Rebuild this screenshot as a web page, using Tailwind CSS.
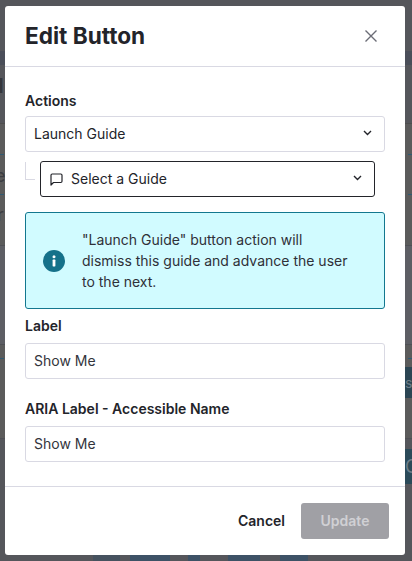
<!DOCTYPE html>
<html lang="en">
<head>
    <meta charset="UTF-8">
    <meta name="viewport" content="width=device-width, initial-scale=1.0">
    <title>Edit Button</title>
    <script src="https://cdn.jsdelivr.net/npm/@tailwindcss/browser@4"></script>
</head>
<body class="relative h-[561px] w-[412px] overflow-hidden bg-[#55565b] font-['Inter',sans-serif]">
    <!-- Dimmed page behind the modal -->
    <div class="flex h-full flex-col">
        <div class="h-[51px] bg-[#55565b]"></div>
        <div class="h-[14px] bg-[#4a4e59]"></div>
        <div class="h-[58px] bg-[#55565b]"></div>
        <div class="h-[122px] border-t border-[#4e4e4e] bg-[#5b5b5b]">
            <div class="mt-[30px] flex justify-between"><span class="h-px w-[4px] bg-[#2f5a73]"></span><span class="h-px w-[4px] bg-[#2f5a73]"></span></div>
            <div class="mt-[39px] flex justify-between"><span class="h-px w-[4px] bg-[#2f5a73]"></span><span class="h-px w-[4px] bg-[#2f5a73]"></span></div>
        </div>
        <div class="h-[99px] border-t border-[#4f5055] bg-[#5d5e64]"></div>
        <div class="h-[94px] border-t border-[#4f5055] bg-[#5b5b5b]">
            <div class="mt-[13px] flex justify-between"><span class="h-px w-[4px] bg-[#2f5a73]"></span><span class="h-px w-[4px] bg-[#2f5a73]"></span></div>
            <div class="mt-[8px] ml-auto flex h-[31px] w-[7px] items-center overflow-hidden bg-[#2b4553] text-[14px] text-[#6d7d88]">s</div>
        </div>
        <div class="flex h-[123px] flex-col border-t border-[#4f5055] bg-[#55565b]">
            <div class="mt-[10px] ml-auto flex h-[35px] w-[7px] items-center overflow-hidden bg-[#2b4a59] text-[18px] text-[#6d7d88]">C</div>
            <div class="mt-auto ml-[93px] flex h-[6px] gap-[10px]">
                <span class="w-[27px] bg-[#46525f]"></span>
                <span class="w-[40px] bg-[#3d5266]"></span>
                <span class="ml-[8px] w-[12px] bg-[#3d5266]"></span>
                <span class="ml-[18px] w-[32px] bg-[#3d5266]"></span>
                <span class="ml-[10px] w-[28px] bg-[#3d5266]"></span>
            </div>
        </div>
    </div>

    <!-- Letters of the page showing past the modal's left edge -->
    <span class="absolute top-[74px] -left-[9px] text-[20px] leading-[24px] font-bold text-[#35363b]">d</span>
    <span class="absolute top-[166px] -left-[5px] text-[18px] leading-[20px] text-[#3c3d42]">e</span>
    <span class="absolute top-[205px] -left-[3px] text-[18px] leading-[20px] text-[#3c3d42]">r</span>

    <!-- Modal -->
    <div class="absolute top-[6px] left-[5px] flex h-[549px] w-[400px] flex-col rounded-[3px] bg-white text-[#23242a]">
        <div class="flex h-[61px] items-center justify-between border-b border-[#d9d9e3] pr-[28px] pl-[20px]">
            <h1 class="text-[22.6px] font-bold leading-none">Edit Button</h1>
            <button class="text-[#6b6c76]">
                <svg class="h-[12px] w-[12px]" viewBox="0 0 12 12" fill="none" stroke="currentColor" stroke-width="1.4"><path d="M.5.5l11 11M11.5.5l-11 11"/></svg>
            </button>
        </div>

        <div class="flex-1 px-[20px] pt-[25px]">
            <label class="block text-[14px] font-semibold leading-[17px]">Actions</label>
            <div class="mt-[7px] flex h-[36px] items-center justify-between rounded-[3px] border border-[#d9d9e3] pr-[12px] pb-[2px] pl-[8px] text-[14px]">
                <span>Launch Guide</span>
                <svg class="h-[6px] w-[9px] text-[#23242a]" viewBox="0 0 9 6" fill="none" stroke="currentColor" stroke-width="1.4"><path d="M1 1l3.5 3.5L8 1"/></svg>
            </div>

            <div class="relative mt-[9px] mr-[10px] ml-[15px]">
                <div class="absolute top-[1px] -left-[15px] h-[18px] w-[10px] border-b border-l border-[#d9d9e3]"></div>
                <div class="flex h-[36px] items-center justify-between rounded-[3px] border border-[#23242a] pr-[12px] pb-[2px] pl-[9px] text-[14px]">
                    <span class="flex items-center gap-[8px]">
                        <svg class="mt-[2px] h-[13px] w-[13px] text-[#23242a]" viewBox="0 0 13 13" fill="none" stroke="currentColor" stroke-width="1.2" stroke-linejoin="round"><path d="M1 2.2C1 1.5 1.5 1 2.2 1h8.6c.7 0 1.2.5 1.2 1.2v6.1c0 .7-.5 1.2-1.2 1.2H3.5L1 12V2.2z"/></svg>
                        Select a Guide
                    </span>
                    <svg class="h-[6px] w-[9px] text-[#23242a]" viewBox="0 0 9 6" fill="none" stroke="currentColor" stroke-width="1.4"><path d="M1 1l3.5 3.5L8 1"/></svg>
                </div>
            </div>

            <div class="mt-[15px] flex h-[97px] items-center rounded-[3px] border border-[#13778f] bg-[#d1fbff] pl-[17px]">
                <svg class="h-[22px] w-[22px] shrink-0" viewBox="0 0 22 22">
                    <circle cx="11" cy="11" r="11" fill="#15718a"/>
                    <circle cx="11" cy="6.8" r="1.5" fill="#fff"/>
                    <rect x="9.6" y="9.6" width="2.8" height="6.8" rx="0.6" fill="#fff"/>
                </svg>
                <p class="ml-[17px] w-[270px] text-[14px] leading-[21px] text-[#2f3038]">"Launch Guide" button action will dismiss this guide and advance the user to the next.</p>
            </div>

            <label class="mt-[8px] block text-[14px] font-semibold leading-[17px]">Label</label>
            <div class="mt-[9px] flex h-[36px] items-center rounded-[3px] border border-[#d9d9e3] px-[8px] pb-[2px] text-[14px] text-[#33343c]">Show Me</div>

            <label class="mt-[21px] block text-[14px] font-semibold leading-[17px]">ARIA Label - Accessible Name</label>
            <div class="mt-[9px] flex h-[36px] items-center rounded-[3px] border border-[#d9d9e3] px-[8px] pb-[2px] text-[14px] text-[#33343c]">Show Me</div>
        </div>

        <div class="flex h-[69px] items-center justify-end gap-[16px] border-t border-[#d9d9e3] pr-[16px]">
            <button class="pb-[2px] text-[14px] font-semibold text-[#23242a]">Cancel</button>
            <button class="h-[36px] w-[88px] rounded-[3px] bg-[#a0a0a5] pb-[2px] text-[14px] font-semibold text-[#d0d0d4]">Update</button>
        </div>
    </div>
</body>
</html>
